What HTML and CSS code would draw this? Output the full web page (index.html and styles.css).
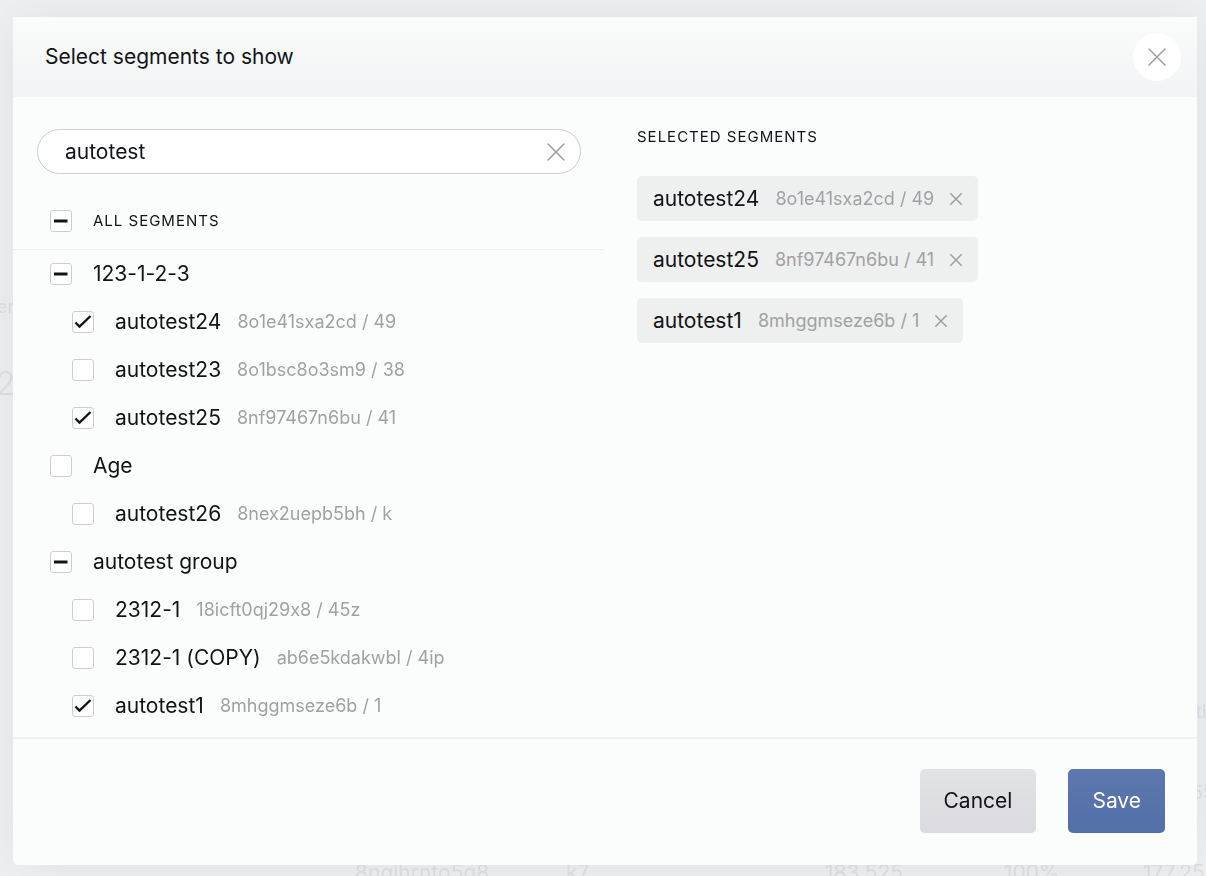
FILE: index.html
```html
<!DOCTYPE html>
<html lang="en">
<head>
<meta charset="utf-8">
<meta name="viewport" content="width=device-width, initial-scale=1">
<title>Select segments to show</title>
<link rel="stylesheet" href="styles.css">
</head>
<body>
<div class="backdrop" aria-hidden="true">
  <span class="ghost ghost-label">er</span>
  <span class="ghost ghost-total">2</span>
  <span class="ghost ghost-th">th</span>
  <span class="ghost ghost-side">55</span>
  <span class="ghost ghost-row ghost-id">8nqihrnto5q8</span>
  <span class="ghost ghost-row ghost-key">k7</span>
  <span class="ghost ghost-row ghost-count">183,525</span>
  <span class="ghost ghost-row ghost-share">100%</span>
  <span class="ghost ghost-row ghost-sum">177,255</span>
</div>
<main class="dialog" role="dialog" aria-labelledby="dialog-title">
  <header class="dialog-header">
    <h1 class="dialog-title" id="dialog-title">Select segments to show</h1>
    <button class="close" type="button" aria-label="Close">
      <svg class="cross" viewBox="0 0 18 18"><path d="M1 1 17 17M17 1 1 17"/></svg>
    </button>
  </header>
  <div class="dialog-body">
    <section class="picker">
      <div class="search">
        <input class="search-input" type="text" value="autotest" aria-label="Search segments">
        <button class="search-clear" type="button" aria-label="Clear search">
          <svg class="cross" viewBox="0 0 18 18"><path d="M1 1 17 17M17 1 1 17"/></svg>
        </button>
      </div>
      <label class="row row-all"><span class="check"><input type="checkbox" data-partial><svg class="dash" viewBox="0 0 22 22"><path d="M4 11H17.5"/></svg></span><span class="caps">ALL SEGMENTS</span></label>
      <label class="row"><span class="check"><input type="checkbox" data-partial><svg class="dash" viewBox="0 0 22 22"><path d="M4 11H17.5"/></svg></span><span class="name">123-1-2-3</span></label>
      <label class="row child"><span class="check"><input type="checkbox" checked><svg class="tick" viewBox="0 0 22 22"><path d="M3.5 11.5 7.5 15.5 18.5 5"/></svg></span><span class="name">autotest24</span><span class="meta">8o1e41sxa2cd / 49</span></label>
      <label class="row child"><span class="check"><input type="checkbox"></span><span class="name">autotest23</span><span class="meta">8o1bsc8o3sm9 / 38</span></label>
      <label class="row child"><span class="check"><input type="checkbox" checked><svg class="tick" viewBox="0 0 22 22"><path d="M3.5 11.5 7.5 15.5 18.5 5"/></svg></span><span class="name">autotest25</span><span class="meta">8nf97467n6bu / 41</span></label>
      <label class="row"><span class="check"><input type="checkbox"></span><span class="name">Age</span></label>
      <label class="row child"><span class="check"><input type="checkbox"></span><span class="name">autotest26</span><span class="meta">8nex2uepb5bh / k</span></label>
      <label class="row"><span class="check"><input type="checkbox" data-partial><svg class="dash" viewBox="0 0 22 22"><path d="M4 11H17.5"/></svg></span><span class="name">autotest group</span></label>
      <label class="row child"><span class="check"><input type="checkbox"></span><span class="name">2312-1</span><span class="meta">18icft0qj29x8 / 45z</span></label>
      <label class="row child"><span class="check"><input type="checkbox"></span><span class="name">2312-1 (COPY)</span><span class="meta">ab6e5kdakwbl / 4ip</span></label>
      <label class="row child"><span class="check"><input type="checkbox" checked><svg class="tick" viewBox="0 0 22 22"><path d="M3.5 11.5 7.5 15.5 18.5 5"/></svg></span><span class="name">autotest1</span><span class="meta">8mhggmseze6b / 1</span></label>
    </section>
    <section class="selected">
      <h2 class="caps">SELECTED SEGMENTS</h2>
      <ul class="tags">
        <li class="tag"><span class="name">autotest24</span><span class="meta">8o1e41sxa2cd / 49</span><button class="tag-remove" type="button" aria-label="Remove autotest24"><svg class="cross" viewBox="0 0 12 12"><path d="M0.8 0.8 11.2 11.2M11.2 0.8 0.8 11.2"/></svg></button></li>
        <li class="tag"><span class="name">autotest25</span><span class="meta">8nf97467n6bu / 41</span><button class="tag-remove" type="button" aria-label="Remove autotest25"><svg class="cross" viewBox="0 0 12 12"><path d="M0.8 0.8 11.2 11.2M11.2 0.8 0.8 11.2"/></svg></button></li>
        <li class="tag"><span class="name">autotest1</span><span class="meta">8mhggmseze6b / 1</span><button class="tag-remove" type="button" aria-label="Remove autotest1"><svg class="cross" viewBox="0 0 12 12"><path d="M0.8 0.8 11.2 11.2M11.2 0.8 0.8 11.2"/></svg></button></li>
      </ul>
    </section>
  </div>
  <footer class="dialog-footer">
    <button class="button button-cancel" type="button">Cancel</button>
    <button class="button button-save" type="button">Save</button>
  </footer>
</main>
<script src="script.js"></script>
</body>
</html>
```
FILE: styles.css
```css
* { box-sizing: border-box; }

body {
  margin: 0;
  min-height: 100vh;
  display: flex;
  padding: 17px 9px 11px 13px;
  background: #eff0f2;
  color: #111318;
  font-family: Inter, "Liberation Sans", sans-serif;
  font-size: 21px;
  line-height: 24px;
  font-variant-ligatures: no-contextual;
}

button, input { font: inherit; color: inherit; margin: 0; }
button { border: 0; padding: 0; background: none; cursor: pointer; }

/* Page content showing faintly behind the dialog */
.backdrop { position: fixed; inset: 0; overflow: hidden; }
.ghost { position: absolute; color: #dfe0e3; font-size: 18px; white-space: nowrap; }
.ghost-label { left: -3px; top: 295px; }
.ghost-total { left: -4px; top: 366px; font-size: 32px; line-height: 36px; font-weight: 300; }
.ghost-th { left: 1196px; top: 700px; }
.ghost-side { left: 1192px; top: 781px; }
.ghost-row { top: 861px; font-size: 21px; }
.ghost-id { left: 355px; }
.ghost-key { left: 566px; }
.ghost-count { left: 825px; }
.ghost-share { left: 1004px; }
.ghost-sum { left: 1143px; }

.dialog {
  position: relative;
  flex: 1;
  min-width: 0;
  display: flex;
  flex-direction: column;
  background: #fbfdfc;
  border-radius: 0 0 5px 5px;
  box-shadow: 0 0 60px rgba(20, 22, 30, 0.07);
}

.dialog-header {
  display: flex;
  align-items: center;
  justify-content: space-between;
  height: 80px;
  padding: 0 16px 0 32px;
  background: linear-gradient(#fafcfb, #f2f3f5);
}
.dialog-title { margin: 0; font-size: 21px; font-weight: 400; }

.close {
  display: grid;
  place-items: center;
  width: 48px;
  height: 48px;
  border-radius: 50%;
  background: #fff;
}
.cross { display: block; width: 18px; height: 18px; fill: none; stroke: #9c9da1; stroke-width: 1.5; stroke-linecap: round; }

.dialog-body { flex: 1; display: grid; grid-template-columns: 1fr 1fr; }

.picker { padding: 32px 0 7px; }
.search {
  display: flex;
  align-items: center;
  height: 45px;
  margin: 0 24px 19px;
  padding: 0 15px 0 27px;
  border: 1px solid #cccdce;
  border-radius: 23px;
  background: #fff;
}
.search-input { flex: 1; min-width: 0; padding: 0; border: 0; outline: 0; background: none; }

.row { display: flex; align-items: center; height: 48px; padding-left: 37px; }
.row-all { height: 57px; border-bottom: 1px solid #eeefef; }
.child { padding-left: 59px; }

.check { display: grid; flex: none; margin-right: 21px; }
.check > * { grid-area: 1 / 1; width: 22px; height: 22px; }
.check input {
  appearance: none;
  border: 1px solid #cccdce;
  border-radius: 3px;
  background: #fff;
}
.check svg { fill: none; stroke: #111318; pointer-events: none; }
.dash { stroke-width: 3; }
.tick { stroke-width: 2.4; }

.meta { margin-left: 16px; font-size: 18px; color: #a0a1a4; }
.caps { margin: 0; font-size: 15px; font-weight: 400; letter-spacing: 1px; }

.selected { padding: 28px 32px; }
.tags { display: flex; flex-direction: column; align-items: flex-start; gap: 16px; margin: 27px 0 0; padding: 0; list-style: none; }
.tag { display: flex; align-items: center; height: 45px; padding: 0 16px; border-radius: 5px; background: #eeefef; }
.tag-remove { margin-left: 16px; }
.tag-remove .cross { width: 12px; height: 12px; }

.dialog-footer {
  display: flex;
  justify-content: flex-end;
  gap: 32px;
  padding: 30px 32px 32px;
  border-top: 2px solid #eeefef;
}
.button { height: 64px; padding: 0 24px; border-radius: 5px; }
.button-cancel { background: linear-gradient(#e2e3e4, #dadae0); }
.button-save { background: linear-gradient(#5d78ae, #526fa8); color: #fff; }
```
FILE: script.js
```js
document.querySelectorAll('input[data-partial]').forEach(function (box) {
  box.indeterminate = true;
});
```
